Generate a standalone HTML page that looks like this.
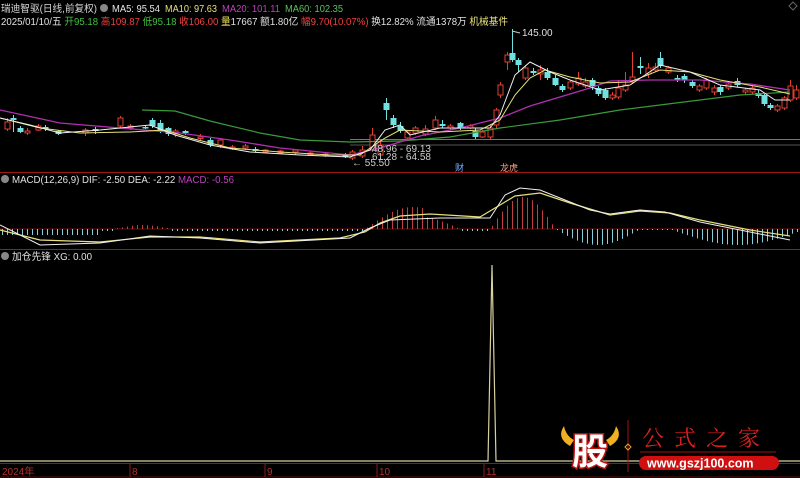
<!DOCTYPE html>
<html><head><meta charset="utf-8"><style>
html,body{margin:0;padding:0;background:#000;width:800px;height:478px;overflow:hidden}
svg{display:block}
text{font-family:"Liberation Sans","Noto Sans CJK SC",sans-serif}
</style></head><body>
<svg id="s" width="800" height="478" viewBox="0 0 800 478" xmlns="http://www.w3.org/2000/svg" font-size="10">
<rect width="800" height="478" fill="#000"/>
<!-- header -->
<text x="1" y="12" fill="#d8d8d8" textLength="96" lengthAdjust="spacingAndGlyphs">瑞迪智驱(日线,前复权)</text>
<circle cx="104" cy="8" r="4" fill="#888"/>
<text x="112" y="12" fill="#e6e6e6" textLength="48" lengthAdjust="spacingAndGlyphs">MA5: 95.54</text>
<text x="165" y="12" fill="#e8e07a" textLength="52" lengthAdjust="spacingAndGlyphs">MA10: 97.63</text>
<text x="222" y="12" fill="#c040c0" textLength="58" lengthAdjust="spacingAndGlyphs">MA20: 101.11</text>
<text x="285" y="12" fill="#5cc05c" textLength="58" lengthAdjust="spacingAndGlyphs">MA60: 102.35</text>
<text x="1" y="25" fill="#e0e0e0" textLength="507" lengthAdjust="spacingAndGlyphs">2025/01/10/五 <tspan fill="#40c040">开95.18</tspan> <tspan fill="#f04040">高109.87</tspan> <tspan fill="#40c040">低95.18</tspan> <tspan fill="#f04040">收106.00</tspan> <tspan fill="#e8e060">量</tspan>17667 额1.80亿 <tspan fill="#f04040">幅9.70(10.07%)</tspan> 换12.82% 流通1378万 <tspan fill="#e8e07a">机械基件</tspan></text>
<path d="M793 2 l4 4 -4 4 -4 -4z" fill="none" stroke="#666"/>
<line x1="350" y1="139.5" x2="800" y2="139.5" stroke="#777"/>
<line x1="350" y1="145" x2="800" y2="145" stroke="#555"/>
<g id="candles"></g>
<polyline fill="none" stroke="#3a9a3a" stroke-width="1.2" points="142,110 175,111 210,121 260,133 300,140 350,142 400,141 450,137 500,128 560,120 620,110 700,100 740,95 790,92"/>
<polyline fill="none" stroke="#b030b0" stroke-width="1.3" points="0,110 60,123 120,128 180,133 230,140 280,148 350,155 380,148 420,136 460,128 500,118 530,106 560,97 590,88 610,81 650,80 700,80 750,84 790,90"/>
<polyline fill="none" stroke="#e8e07a" stroke-width="1" points="0,118 40,128 80,133 130,132 165,130 190,138 230,148 280,152 330,155 360,155 385,138 400,130 440,132 480,130 500,120 515,95 530,78 545,70 570,77 600,83 630,82 660,70 690,72 720,80 760,87 790,94"/>
<polyline fill="none" stroke="#f0f0f0" stroke-width="1" points="0,118 30,125 60,133 100,130 150,125 175,135 210,145 250,152 300,155 350,157 370,150 385,130 400,125 410,135 440,128 490,128 500,115 515,75 530,62 550,72 570,80 600,90 630,85 660,65 690,72 720,85 760,90 775,100 790,100"/>
<text x="522" y="36" fill="#e0e0e0">145.00</text>
<path d="M512 31 l8 2" stroke="#ccc" fill="none"/>
<text x="372" y="152" fill="#ccc">48.96 - 69.13</text>
<text x="372" y="160" fill="#ccc">61.28 - 64.58</text>
<text x="352" y="166" fill="#ccc">← 55.50</text>
<text x="455" y="171" fill="#7ab0ff" font-size="9">财</text>
<text x="500" y="171" fill="#f0a080" font-size="9">龙虎</text>
<line x1="0" y1="172.5" x2="800" y2="172.5" stroke="#a01818"/>
<!-- MACD -->
<circle cx="5" cy="179" r="4" fill="#888"/>
<text x="12" y="183" fill="#e0e0e0" textLength="222" lengthAdjust="spacingAndGlyphs">MACD(12,26,9) DIF: -2.50 DEA: -2.22 <tspan fill="#c040c0">MACD: -0.56</tspan></text>
<line x1="0" y1="229" x2="800" y2="229" stroke="#6a1010"/>
<g id="hist"></g>
<polyline fill="none" stroke="#e8e07a" stroke-width="1.2" points="0,230 40,240 100,242 150,237 200,237 260,242 340,238 365,232 380,223 400,216 430,214 480,217 500,205 515,196 540,193 570,203 610,215 640,211 670,213 700,220 750,230 790,236"/>
<polyline fill="none" stroke="#f0f0f0" stroke-width="1" points="0,225 40,245 100,243 150,236 200,238 260,243 350,238 370,228 390,220 440,218 490,218 505,195 520,188 540,190 560,198 590,210 610,214 640,210 665,212 700,222 750,232 790,240"/>
<line x1="0" y1="249.5" x2="800" y2="249.5" stroke="#a01818"/>
<circle cx="5" cy="256" r="4" fill="#888"/>
<text x="12" y="260" fill="#e0e0e0" textLength="80" lengthAdjust="spacingAndGlyphs">加仓先锋 XG: 0.00</text>
<polyline fill="none" stroke="#d8d0a0" stroke-width="1.2" points="0,461 488,461 492,265 496,461 800,461"/>
<line x1="0" y1="463.5" x2="800" y2="463.5" stroke="#8a1a1a"/>
<line x1="0" y1="477" x2="800" y2="477" stroke="#5a1010"/>
<text x="2" y="475" fill="#b03030">2024年</text>
<line x1="130" y1="464" x2="130" y2="477" stroke="#8a1a1a"/><text x="132" y="475" fill="#b03030">8</text>
<line x1="265" y1="464" x2="265" y2="477" stroke="#8a1a1a"/><text x="267" y="475" fill="#b03030">9</text>
<line x1="377" y1="464" x2="377" y2="477" stroke="#8a1a1a"/><text x="379" y="475" fill="#b03030">10</text>
<line x1="484" y1="464" x2="484" y2="477" stroke="#8a1a1a"/><text x="486" y="475" fill="#b03030">11</text>
<!-- logo -->
<path d="M564 426 q-8 12 6 20 l4 -6 q-8 -4 -10 -14z" fill="#f0b020"/>
<path d="M616 426 q8 12 -6 20 l-4 -6 q8 -4 10 -14z" fill="#f0b020"/>
<text x="572" y="464" fill="#fff" stroke="#c01010" stroke-width="3" paint-order="stroke" style="font-family:'Noto Sans CJK SC',sans-serif;font-size:36px;font-weight:bold">股</text>
<line x1="628" y1="420" x2="628" y2="472" stroke="#a01010"/>
<path d="M628 444 l3 3 -3 3 -3 -3z" fill="none" stroke="#f0a030"/>
<text x="642" y="446" fill="#e02020" style="font-family:'Noto Serif CJK SC',serif;font-size:22px;letter-spacing:10px">公式之家</text>
<line x1="640" y1="452" x2="776" y2="452" stroke="#a01010"/>
<rect x="639" y="456" width="140" height="14" rx="7" fill="#d01010"/>
<text x="647" y="467.5" fill="#fff" style="font-size:12.5px;font-weight:bold">www.gszj100.com</text>
</svg>
<script>
var ns="http://www.w3.org/2000/svg";
function el(p,t,a){var e=document.createElementNS(ns,t);for(var k in a)e.setAttribute(k,a[k]);p.appendChild(e);}
var c=document.getElementById('candles');
var data=[[7,122,129,118,131,1],[13,120,118,115,132,0],[20,128,132,126,133,0],[27,131,133,128,135,1],[38,126,130,124,131,1],[45,127,129,125,131,0],[58,131,134,130,135,0],[85,133,130,128,136,1],[95,129,131,127,134,0],[120,118,126,116,128,1],[130,128,126,124,130,1],[145,127,128,125,129,0],[152,120,126,118,128,0],[160,123,131,120,133,0],[168,128,134,127,136,0],[175,131,134,129,137,1],[185,131,133,130,135,0],[200,137,138,134,140,1],[210,140,145,138,147,0],[220,140,145,138,148,1],[232,147,149,145,150,1],[245,146,148,144,150,1],[255,149,151,147,152,0],[265,150,152,149,153,1],[280,151,153,150,154,1],[295,152,150,149,155,1],[310,153,154,151,156,1],[325,154,155,153,157,1],[345,155,157,153,158,0],[352,152,158,150,160,1],[362,150,156,146,158,1],[372,135,150,128,152,1],[380,145,155,140,156,1],[386,103,110,98,120,0],[393,118,125,115,128,0],[400,126,131,122,133,0],[407,132,138,130,140,1],[415,128,133,126,135,1],[425,129,134,125,136,1],[435,120,128,116,130,1],[442,124,126,120,128,0],[450,126,128,124,130,1],[460,123,128,122,130,0],[470,126,128,124,129,1],[475,131,137,128,139,0],[482,132,137,130,138,1],[490,128,137,125,140,1],[496,110,125,108,128,1],[500,85,95,82,98,1],[507,55,62,52,70,1],[512,53,60,29,62,0],[518,60,65,58,72,0],[525,68,78,65,80,1],[533,71,73,68,75,0],[540,70,74,65,80,1],[547,72,78,68,80,0],[555,78,85,75,86,0],[562,86,90,84,92,0],[570,82,88,80,90,1],[578,78,84,72,86,1],[585,82,86,78,88,1],[592,80,86,78,90,0],[598,88,94,86,96,0],[605,90,98,88,100,0],[612,95,98,92,100,1],[618,88,97,80,99,1],[625,85,90,72,92,1],[632,77,82,52,84,1],[640,66,68,57,74,0],[648,68,74,63,78,1],[655,67,70,63,72,1],[660,58,66,52,68,0],[668,68,72,66,74,1],[677,78,80,75,82,0],[684,76,80,74,83,0],[692,82,86,80,88,0],[699,86,90,84,92,1],[706,80,88,78,90,1],[714,88,92,85,95,1],[720,87,92,85,95,0],[728,84,88,82,90,1],[737,81,85,78,87,0],[745,90,92,88,94,1],[752,88,92,86,94,1],[758,93,96,90,98,0],[764,95,104,93,106,0],[770,105,108,103,110,0],[777,106,110,104,112,1],[784,98,108,96,110,1],[790,86,100,80,102,1],[796,90,98,85,100,1]];
data.forEach(function(d){var x=d[0],o=d[1],cl=d[2],lo=d[3],hi=d[4],up=d[5];
var col=up?'#e04030':'#70e0e0';
el(c,'line',{x1:x+0.5,y1:lo,x2:x+0.5,y2:hi,stroke:col});
var y=Math.min(o,cl),h=Math.max(1.5,Math.abs(o-cl));
if(up)el(c,'rect',{x:x-2,y:y,width:5,height:h,fill:'#000',stroke:col});else el(c,'rect',{x:x-2.5,y:y,width:6,height:h,fill:col});});
var hg=document.getElementById('hist');
function amp(x){var v=0;
if(x<100)v=-6; else if(x<115)v=-2; else if(x<170)v=4*Math.sin((x-115)/55*Math.PI); else if(x<365)v=-2;
else if(x<460)v=22*Math.max(0,Math.sin((x-365)/95*Math.PI))*(x<425?1:0.6); else if(x<490)v=-2;
else if(x<555)v=32*Math.sin((x-490)/65*Math.PI); else if(x<640)v=-16*Math.sin((x-555)/85*Math.PI);
else if(x<675)v=-1; else v=-14*Math.sin((x-675)/125*Math.PI)-2; return v;}
for(var x=2;x<798;x+=5){var v=amp(x);if(Math.abs(v)<0.8)v=v<0?-1:1;
el(hg,'line',{x1:x+0.5,y1:229,x2:x+0.5,y2:229-v,stroke:v>0?'#c04040':'#80d0e0'});}
</script>
</body></html>
